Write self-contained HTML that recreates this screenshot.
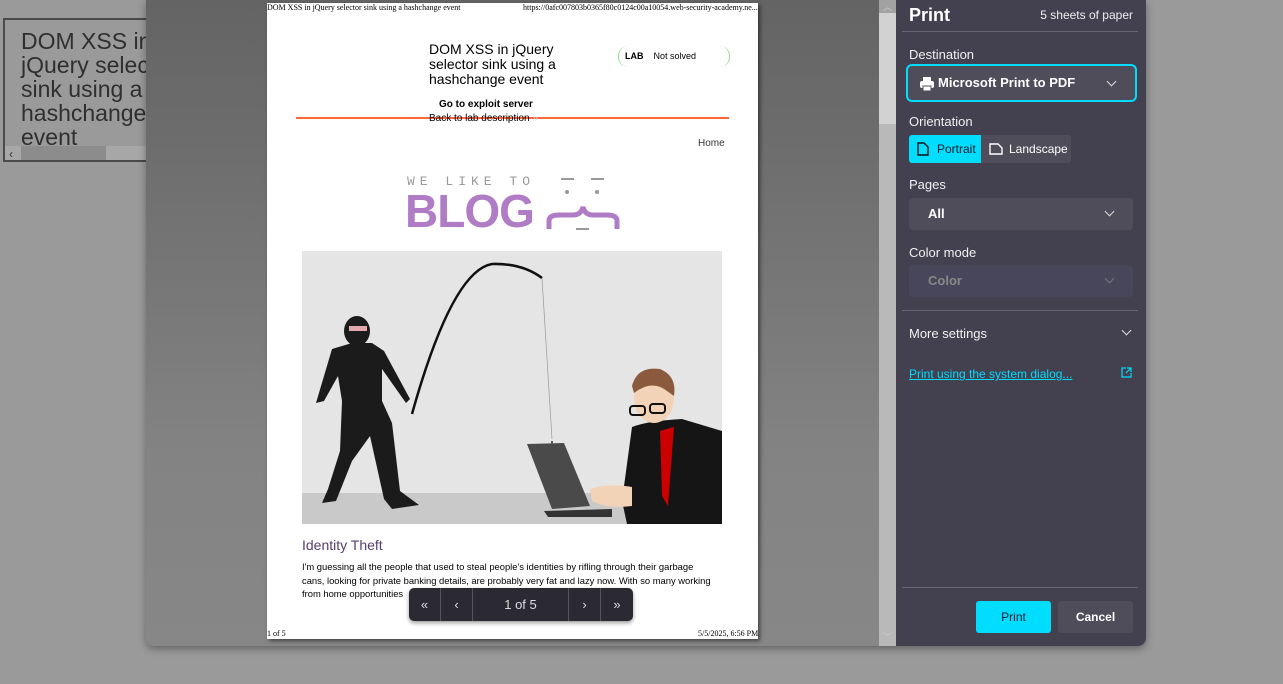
<!DOCTYPE html>
<html><head><meta charset="utf-8"><style>
*{margin:0;padding:0;box-sizing:border-box}
body{width:1283px;height:684px;overflow:hidden;background:#9a9a9a;font-family:"Liberation Sans",sans-serif;position:relative}
.abs{position:absolute}
.bgbox{left:3px;top:18px;width:150px;height:144px;border:2px solid #4a4a4a;overflow:hidden}
.bgbox .t{position:absolute;left:16px;top:9px;font-size:23px;line-height:24px;color:#2f2f2f;white-space:nowrap}
.dialog{left:146px;top:0;width:1000px;height:646px;border-radius:0 0 8px 8px;overflow:hidden;box-shadow:0 3px 8px rgba(0,0,0,.35)}
.prev{left:0;top:0;width:733px;height:646px;background:linear-gradient(#646464,#6c6c6c 20%,#838383 70%,#878787)}
.page{left:121px;top:3px;width:491px;height:636px;background:#fff;box-shadow:2px 2px 4px rgba(0,0,0,.5);font-family:"Liberation Serif",serif;color:#000;overflow:hidden}
.panel{left:750px;top:0;width:250px;height:646px;background:#434150;color:#fff;font-family:"Liberation Sans",sans-serif}
.lbl{position:absolute;left:13px;font-size:13px;color:#f0f0f0}
.sel{position:absolute;left:13px;width:224px;height:32px;background:#4f4d5a;border-radius:4px;font-size:13px;font-weight:bold}
.chev{position:absolute;right:20px;top:10px;width:7px;height:7px;border-right:1.5px solid #ddd;border-bottom:1.5px solid #ddd;transform:rotate(45deg)}
</style></head><body>
<div class="abs bgbox"><div class="t">DOM XSS in<br>jQuery selector<br>sink using a<br>hashchange<br>event</div>
<div class="abs" style="left:0;top:126px;width:146px;height:16px;background:#a7a7a7"></div>
<div class="abs" style="left:16px;top:126px;width:85px;height:16px;background:#8c8c8c"></div>
<div class="abs" style="left:4px;top:127px;font-size:12px;color:#333">‹</div></div>
<div class="abs dialog">
<div class="abs prev"></div>
<div class="abs page">
<div class="abs" style="left:0;top:0;font-size:8px;white-space:nowrap">DOM XSS in jQuery selector sink using a hashchange event</div>
<div class="abs" style="left:256px;top:0;font-size:8px;white-space:nowrap">https://0afc007803b0365f80c0124c00a10054.web-security-academy.ne...</div>
<div class="abs" style="left:162px;top:39px;font-family:'Liberation Sans',sans-serif;font-size:14px;line-height:15px">DOM XSS in jQuery<br>selector sink using a<br>hashchange event</div>
<div class="abs" style="left:351px;top:43px;width:112px;height:21px;border-radius:10px;border-left:1px solid #8d8;border-right:1px solid #8d8;font-family:'Liberation Sans',sans-serif;font-size:9px;line-height:21px;padding-left:6px"><b>LAB</b>&nbsp;&nbsp;&nbsp;&nbsp;Not solved</div>
<div class="abs" style="left:172px;top:96px;font-family:'Liberation Sans',sans-serif;font-size:10px;font-weight:bold">Go to exploit server</div>
<div class="abs" style="left:29px;top:114px;width:433px;height:2px;background:#ff6633"></div>
<div class="abs" style="left:162px;top:110px;font-family:'Liberation Sans',sans-serif;font-size:10px">Back to lab description <span style="color:#ccc">»</span></div>
<div class="abs" style="left:431px;top:135px;font-family:'Liberation Sans',sans-serif;font-size:10px;color:#333">Home</div>
<div class="abs" style="left:140px;top:171px;font-family:'Liberation Mono',monospace;font-size:13px;letter-spacing:5px;color:#999">WE LIKE TO</div>
<div class="abs" style="left:138px;top:183px;font-family:'Liberation Sans',sans-serif;font-size:46px;font-weight:bold;color:#b07cc6;line-height:50px;letter-spacing:-1px">BLOG</div>
<svg class="abs" style="left:278px;top:170px" width="76" height="60"><g fill="#999"><rect x="16" y="5" width="13" height="2"/><rect x="46" y="5" width="13" height="2"/><circle cx="22" cy="19" r="2"/><circle cx="52" cy="19" r="2"/><rect x="31" y="55" width="13" height="2"/></g><path d="M4 56 V48 Q4 42 14 42 H28 Q36 42 38 34 Q40 42 48 42 H62 Q72 42 72 48 V56" fill="none" stroke="#b07cc6" stroke-width="5"/></svg>
<svg class="abs" style="left:35px;top:248px" width="420" height="273" viewBox="0 0 420 273">
<rect width="420" height="273" fill="#e5e5e5"/><rect y="242" width="420" height="31" fill="#c9c9c9"/>
<g fill="#1b1b1b"><ellipse cx="55" cy="80" rx="13" ry="15"/><path d="M50 92 L70 92 L82 100 L108 148 L104 152 L80 118 L80 150 L90 172 L98 240 L117 254 L90 258 L82 248 L68 185 L50 210 L34 250 L20 252 L26 238 L38 200 L40 150 L36 125 L22 150 L14 152 L30 98 Z"/></g>
<rect x="47" y="75" width="18" height="5" fill="#e4a8ac"/>
<path d="M110 163 Q150 20 190 13 Q220 12 240 27" fill="none" stroke="#111" stroke-width="2.5"/>
<line x1="240" y1="27" x2="250" y2="188" stroke="#999" stroke-width="0.7"/>
<path d="M250 190 V225 Q258 232 265 218" fill="none" stroke="#111" stroke-width="1.3"/>
<path d="M225 193 L262 192 L288 255 L250 258 Z" fill="#4a4a4a"/><path d="M242 260 L310 258 L310 266 L246 266 Z" fill="#333"/>
<path d="M330 176 Q345 170 380 168 L420 180 L420 273 L325 273 L320 250 Z" fill="#151515"/>
<path d="M358 180 L372 176 L366 255 L360 245 Z" fill="#c00"/>
<ellipse cx="352" cy="148" rx="20" ry="24" fill="#f3d3b8"/><path d="M330 135 Q335 115 358 118 Q375 125 372 145 L365 140 Q350 128 332 142 Z" fill="#8b5a3c"/>
<rect x="328" y="155" width="15" height="9" rx="3" fill="none" stroke="#111" stroke-width="2"/><rect x="348" y="153" width="15" height="9" rx="3" fill="none" stroke="#111" stroke-width="2"/>
<path d="M288 238 Q305 232 330 236 L330 255 Q305 258 290 250 Z" fill="#f3d3b8"/>
</svg>
<div class="abs" style="left:35px;top:534px;font-family:'Liberation Sans',sans-serif;font-size:14px;color:#563e6c">Identity Theft</div>
<div class="abs" style="left:35px;top:557px;width:415px;font-family:'Liberation Sans',sans-serif;font-size:9.4px;line-height:13.5px">I'm guessing all the people that used to steal people's identities by rifling through their garbage cans, looking for private banking details, are probably very fat and lazy now. With so many working from home opportunities</div>
<div class="abs" style="left:0;top:626px;font-size:8px">1 of 5</div>
<div class="abs" style="left:431px;top:626px;font-size:8px;white-space:nowrap">5/5/2025, 6:56 PM</div>
</div>
<div class="abs" style="left:263px;top:588px;width:224px;height:33px;background:#2b2a33;border-radius:5px;box-shadow:0 2px 4px rgba(0,0,0,.4);color:#ddd;font-size:13px;display:flex">
<div style="width:32px;text-align:center;line-height:33px;border-right:1px solid #555">«</div>
<div style="width:32px;text-align:center;line-height:33px;border-right:1px solid #555">‹</div>
<div style="width:96px;text-align:center;line-height:33px;border-right:1px solid #555">1 of 5</div>
<div style="width:32px;text-align:center;line-height:33px;border-right:1px solid #555">›</div>
<div style="width:32px;text-align:center;line-height:33px">»</div></div>
<div class="abs" style="left:733px;top:0;width:17px;height:646px;background:#b9b9b9"></div>
<div class="abs" style="left:733px;top:0;width:17px;height:13px;background:#a2a2a2;color:#ccc;font-size:9px;text-align:center">︿</div>
<div class="abs" style="left:733px;top:13px;width:17px;height:111px;background:#d2d2d2"></div>
<div class="abs" style="left:733px;top:629px;width:17px;height:17px;color:#ccc;font-size:9px;text-align:center;line-height:17px">﹀</div>
<div class="abs panel">
<div class="abs" style="left:13px;top:5px;font-size:18px;font-weight:bold">Print</div>
<div class="abs" style="right:13px;top:8px;font-size:12px;color:#eee">5 sheets of paper</div>
<div class="abs" style="left:6px;top:31px;width:236px;height:1px;background:#66646f"></div>
<div class="lbl" style="top:47px">Destination</div>
<div class="sel" style="left:10px;top:64px;width:231px;height:38px;border:2px solid #00ddff;border-radius:6px;line-height:34px;padding-left:30px">Microsoft Print to PDF<div class="chev" style="top:12px"></div>
<svg class="abs" style="left:12px;top:11px" width="14" height="14"><rect x="3" y="0" width="8" height="4" fill="#fff"/><rect x="0" y="4" width="14" height="7" rx="2" fill="#fff"/><rect x="3" y="9" width="8" height="5" fill="#fff" stroke="#4f4d5a"/></svg></div>
<div class="lbl" style="top:114px">Orientation</div>
<div class="abs" style="left:13px;top:135px;width:162px;height:28px;background:#4f4d5a;border-radius:3px"></div>
<div class="abs" style="left:13px;top:135px;width:72px;height:28px;background:#00ddff;border-radius:3px 0 0 3px;color:#1a1a2a;font-size:12px;line-height:28px;padding-left:28px">Portrait</div>
<svg class="abs" style="left:21px;top:142px" width="12" height="14"><path d="M1 1H7L11 5V13H1Z" fill="none" stroke="#111" stroke-width="1.4"/></svg>
<svg class="abs" style="left:93px;top:143px" width="14" height="12"><path d="M1 1H9L13 5V11H1Z" fill="none" stroke="#fff" stroke-width="1.4"/></svg>
<div class="abs" style="left:113px;top:135px;font-size:12px;line-height:28px">Landscape</div>
<div class="lbl" style="top:177px">Pages</div>
<div class="sel" style="top:198px;line-height:32px;padding-left:19px">All<div class="chev"></div></div>
<div class="lbl" style="top:245px">Color mode</div>
<div class="sel" style="top:265px;line-height:32px;padding-left:19px;background:#48465a;color:#888;font-weight:bold">Color<div class="chev" style="border-color:#777"></div></div>
<div class="abs" style="left:6px;top:310px;width:236px;height:1px;background:#66646f"></div>
<div class="lbl" style="top:326px">More settings</div><div class="chev" style="right:16px;top:327px"></div>
<div class="abs" style="left:13px;top:367px;font-size:12px;color:#00ddff;text-decoration:underline">Print using the system dialog...</div>
<svg class="abs" style="left:225px;top:367px" width="11" height="11"><path d="M5 1H1V10H10V6M6 1H10V5M10 1L5 6" fill="none" stroke="#00ddff" stroke-width="1.2"/></svg>
<div class="abs" style="left:6px;top:587px;width:236px;height:1px;background:#66646f"></div>
<div class="abs" style="left:80px;top:601px;width:75px;height:32px;background:#00ddff;border-radius:3px;color:#1a1a2a;font-size:12px;text-align:center;line-height:32px">Print</div>
<div class="abs" style="left:162px;top:601px;width:75px;height:32px;background:#4f4d5a;border-radius:3px;font-size:12px;font-weight:bold;text-align:center;line-height:32px">Cancel</div>
</div>
</div>
</body></html>
